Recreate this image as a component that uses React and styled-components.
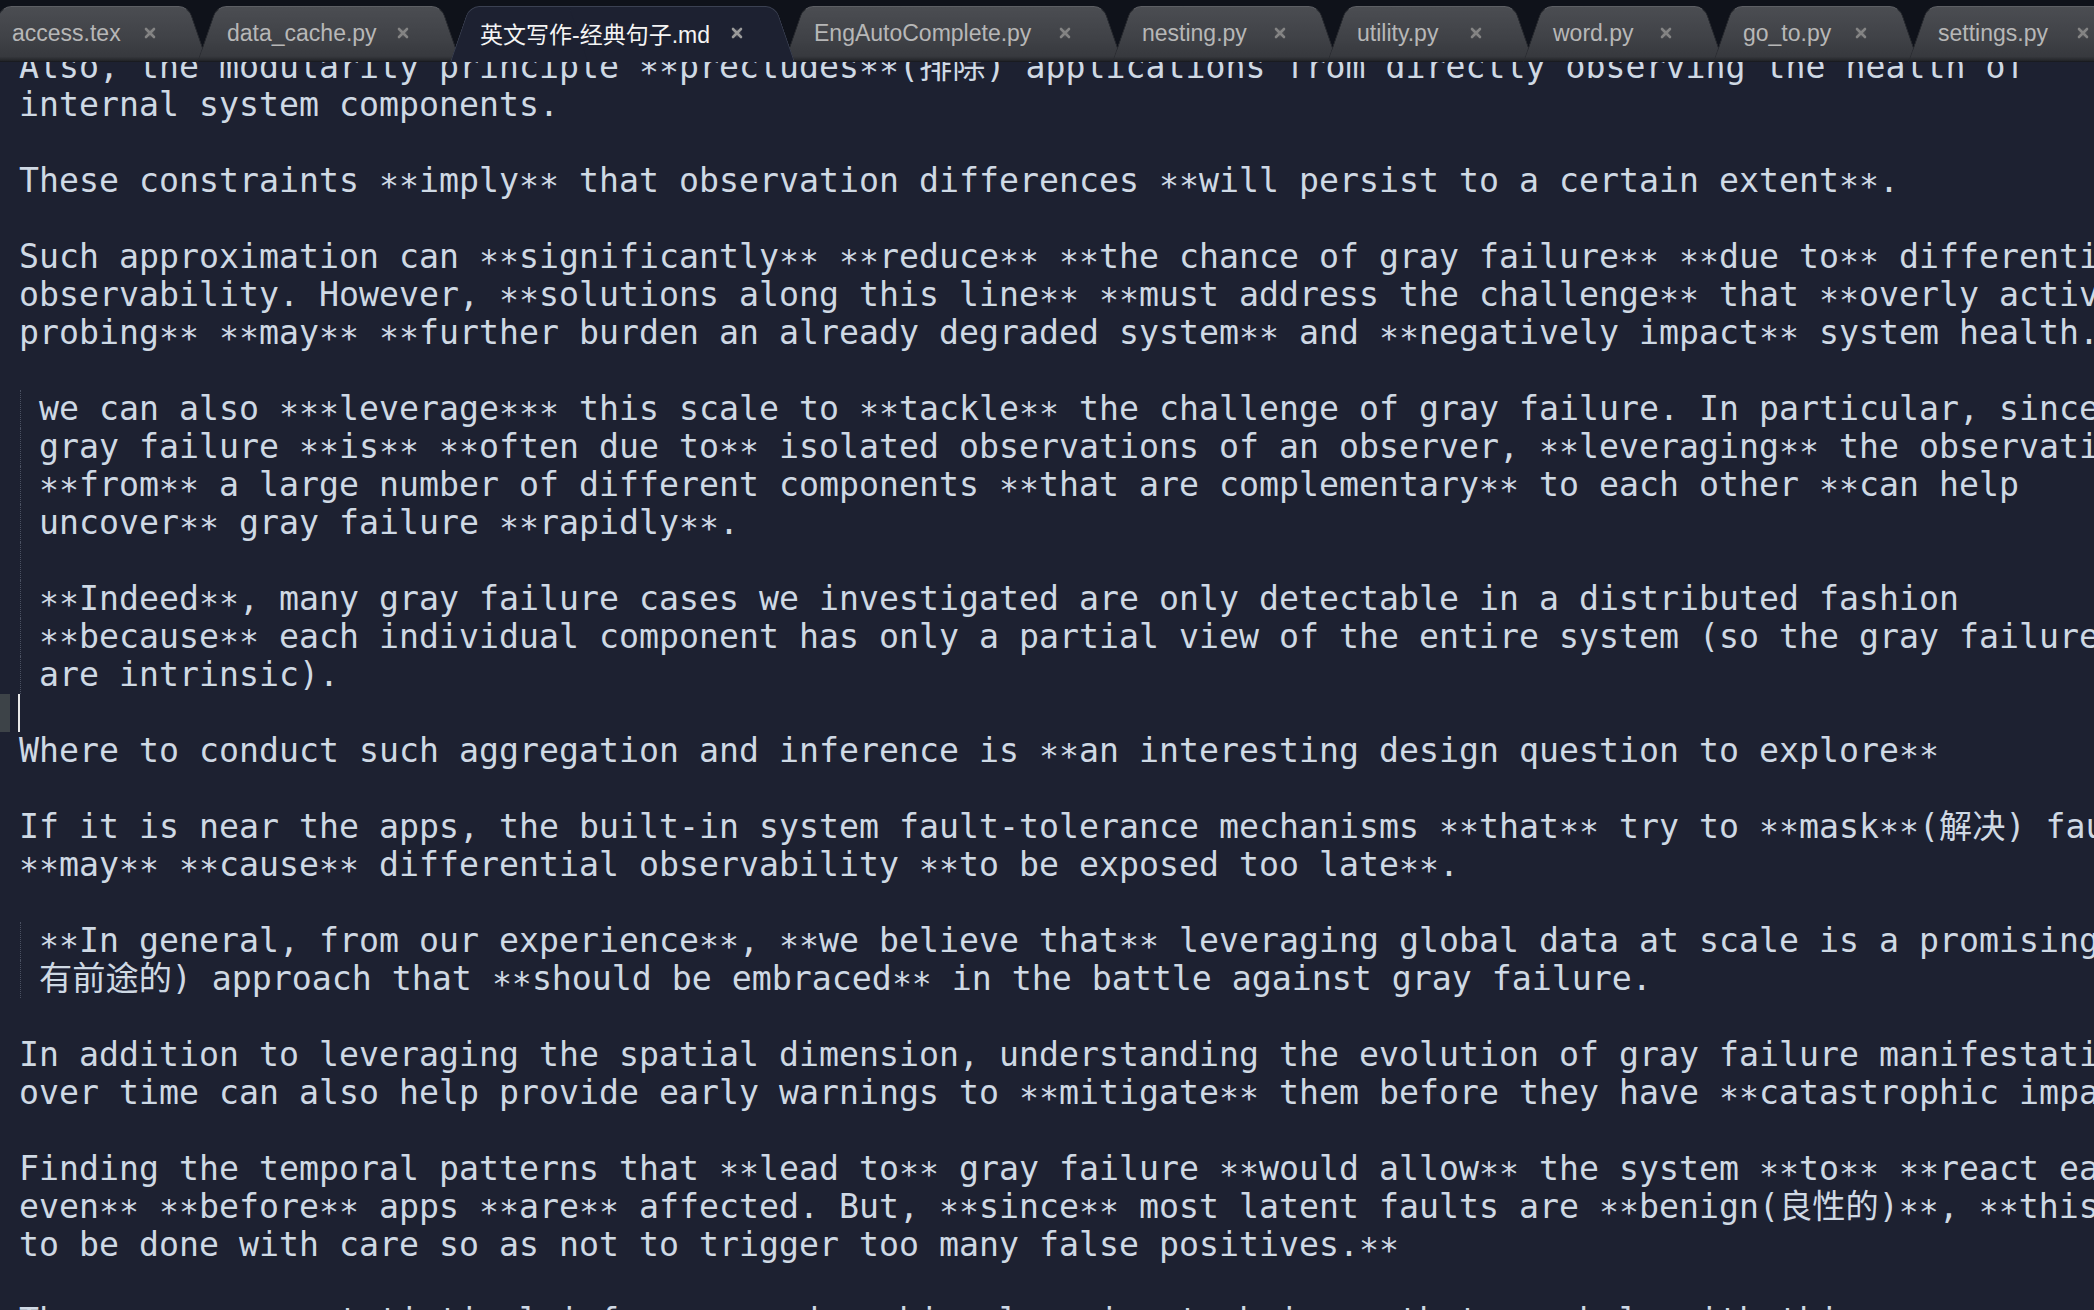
import React from 'react';
import styled, { createGlobalStyle, css } from 'styled-components';

const GlobalStyle = createGlobalStyle`
  html, body {
    margin: 0;
    padding: 0;
    background: #1d2131;
    overflow: hidden;
  }
  #root {
    height: 100vh;
  }
`;

const Window = styled.div`
  display: flex;
  flex-direction: column;
  width: 100vw;
  height: 100vh;
  background: #1d2131;
  overflow: hidden;
`;

const TabBar = styled.div`
  flex: none;
  display: flex;
  height: 62px;
  box-sizing: border-box;
  padding-top: 6px;
  background: #0f121a;
  overflow: hidden;
`;

const TabStrip = styled.div`
  display: flex;
  height: 56px;
  margin-left: -18px;
`;

const inactiveFill = 'linear-gradient(180deg, #4b4d52 0%, #404247 55%, #37393e 90%, #25272b 97%, #14161b 100%)';

const Tab = styled.div`
  position: relative;
  flex: none;
  display: flex;
  align-items: center;
  box-sizing: border-box;
  height: 56px;
  padding: 0 52px 2px 30px;
  z-index: ${p => (p.$active ? 5 : 1)};
  & + & {
    margin-left: -11px;
  }
  &::before,
  &::after {
    content: '';
    position: absolute;
    top: 0;
    bottom: 0;
    width: 60%;
    z-index: -1;
    box-sizing: border-box;
    background: ${p => (p.$active ? '#1d2131' : inactiveFill)};
    border-top: 1px solid ${p => (p.$active ? '#3b4152' : '#5d5f64')};
  }
  &::before {
    left: 0;
    transform-origin: 0 100%;
    transform: skewX(-19deg);
    border-top-left-radius: 10px;
    border-left: 1px solid ${p => (p.$active ? '#3b4152' : '#2a2c31')};
  }
  &::after {
    right: 0;
    transform-origin: 100% 100%;
    transform: skewX(19deg);
    border-top-right-radius: 10px;
    border-right: 1px solid ${p => (p.$active ? '#3b4152' : '#2a2c31')};
  }
`;

const Label = styled.span`
  flex: none;
  width: ${p => p.$w}px;
  white-space: nowrap;
  font-family: 'Liberation Sans', 'Noto Sans CJK SC', sans-serif;
  font-size: 23px;
  color: ${p => (p.$active ? '#f4f4f4' : '#b7b7b7')};
`;

const Close = styled.svg`
  flex: none;
  width: 12px;
  height: 12px;
  margin-left: 21px;
  color: ${p => (p.$active ? '#9a9a9a' : '#848484')};
`;

const Editor = styled.div`
  flex: 1;
  overflow: hidden;
`;

const Scroller = styled.div`
  margin-top: -14px;
`;

const Line = styled.div`
  position: relative;
  height: 38px;
  line-height: 38px;
  padding-left: 19px;
  white-space: pre;
  font-family: 'DejaVu Sans Mono', 'Noto Sans CJK SC', monospace;
  font-size: 33.22px;
  color: #cfd9e4;
  ${p =>
    p.$guide &&
    css`
      &::before {
        content: '';
        position: absolute;
        left: 20px;
        top: 0;
        bottom: 0;
        border-left: 1px dotted #4a5061;
      }
    `}
`;

const Stars = styled.span`
  position: relative;
  top: 6px;
`;

const GutterMark = styled.span`
  position: absolute;
  left: 0;
  top: 0;
  width: 10px;
  height: 100%;
  background: #3d4348;
`;

const Caret = styled.span`
  display: inline-block;
  vertical-align: top;
  width: 2px;
  height: 38px;
  margin-left: -1px;
  background: #e8e8e8;
`;

const tabs = [
  { name: 'access.tex', w: 111 },
  { name: 'data_cache.py', w: 149 },
  { name: '英文写作-经典句子.md', w: 230, active: true },
  { name: 'EngAutoComplete.py', w: 224 },
  { name: 'nesting.py', w: 111 },
  { name: 'utility.py', w: 92 },
  { name: 'word.py', w: 86 },
  { name: 'go_to.py', w: 91 },
  { name: 'settings.py', w: 118 },
];

// g = indent guide, c = caret line
const lines = [
  { t: 'Also, the modularity principle **precludes**(排除) applications from directly observing the health of' },
  { t: 'internal system components.' },
  { t: '' },
  { t: 'These constraints **imply** that observation differences **will persist to a certain extent**.' },
  { t: '' },
  { t: 'Such approximation can **significantly** **reduce** **the chance of gray failure** **due to** differential' },
  { t: 'observability. However, **solutions along this line** **must address the challenge** that **overly active' },
  { t: 'probing** **may** **further burden an already degraded system** and **negatively impact** system health.' },
  { t: '' },
  { t: ' we can also ***leverage*** this scale to **tackle** the challenge of gray failure. In particular, since', g: true },
  { t: ' gray failure **is** **often due to** isolated observations of an observer, **leveraging** the observations', g: true },
  { t: ' **from** a large number of different components **that are complementary** to each other **can help', g: true },
  { t: ' uncover** gray failure **rapidly**.', g: true },
  { t: '', g: true },
  { t: ' **Indeed**, many gray failure cases we investigated are only detectable in a distributed fashion', g: true },
  { t: ' **because** each individual component has only a partial view of the entire system (so the gray failures', g: true },
  { t: ' are intrinsic).', g: true },
  { t: '', c: true },
  { t: 'Where to conduct such aggregation and inference is **an interesting design question to explore**' },
  { t: '' },
  { t: 'If it is near the apps, the built-in system fault-tolerance mechanisms **that** try to **mask**(解决) faults' },
  { t: '**may** **cause** differential observability **to be exposed too late**.' },
  { t: '' },
  { t: ' **In general, from our experience**, **we believe that** leveraging global data at scale is a promising(', g: true },
  { t: ' 有前途的) approach that **should be embraced** in the battle against gray failure.', g: true },
  { t: '' },
  { t: 'In addition to leveraging the spatial dimension, understanding the evolution of gray failure manifestation' },
  { t: 'over time can also help provide early warnings to **mitigate** them before they have **catastrophic impact' },
  { t: '' },
  { t: 'Finding the temporal patterns that **lead to** gray failure **would allow** the system **to** **react early' },
  { t: 'even** **before** apps **are** affected. But, **since** most latent faults are **benign(良性的)**, **this needs' },
  { t: 'to be done with care so as not to trigger too many false positives.**' },
  { t: '' },
  { t: 'There are many statistical inference and machine learning techniques that can help with this.' },
];

const renderText = text =>
  text.split(/(\*+)/).map((part, i) => (/^\*+$/.test(part) ? <Stars key={i}>{part}</Stars> : part));

const CloseIcon = ({ active }) => (
  <Close $active={active} viewBox="0 0 12 12">
    <path d="M2 2 L10 10 M10 2 L2 10" stroke="currentColor" strokeWidth="2.6" strokeLinecap="round" />
    <path d="M6 1.5 V10.5 M1.5 6 H10.5" stroke="currentColor" strokeWidth="0.8" opacity="0.35" />
  </Close>
);

const App = () => (
  <Window>
    <GlobalStyle />
    <TabBar>
      <TabStrip>
        {tabs.map(tab => (
          <Tab key={tab.name} $active={tab.active}>
            <Label $w={tab.w} $active={tab.active}>
              {tab.name}
            </Label>
            <CloseIcon active={tab.active} />
          </Tab>
        ))}
      </TabStrip>
    </TabBar>
    <Editor>
      <Scroller>
        {lines.map((line, i) => (
          <Line key={i} $guide={line.g}>
            {line.c && <GutterMark />}
            {line.c && <Caret />}
            {renderText(line.t)}
          </Line>
        ))}
      </Scroller>
    </Editor>
  </Window>
);

export default App;
